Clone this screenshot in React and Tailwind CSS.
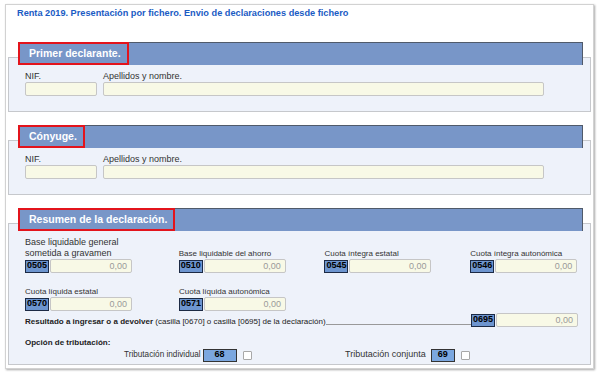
import React from 'react';

const font = "font-['Liberation_Sans',Arial,sans-serif]";

const SectionHeader = ({ title }) => (
  <div className="relative z-10 ml-[12px] flex h-[23px] w-[565px] border-t border-r border-[#505a6a] bg-[#7896c8]">
    <div className="flex h-[23px] -mt-px items-center border-2 border-[#e3141c] pl-[9px] pr-[6px] text-[10.5px] font-bold text-white">
      {title}
    </div>
  </div>
);

const Panel = ({ className = '', children }) => (
  <div className={`mx-[2px] -mt-[8px] border border-[#c6c8cc] bg-[#eef2fa] pl-[16px] ${className}`}>
    {children}
  </div>
);

const Input = ({ className = '', value }) => (
  <div className={`h-[14px] rounded-[2px] border border-[#c6c6c6] bg-[#f8f9e6] pr-[4px] text-right text-[9px] leading-[12px] text-[#9a9a9a] ${className}`}>
    {value}
  </div>
);

const Code = ({ code }) => (
  <div className="flex h-[13px] w-[24px] items-center justify-center border border-[#1c2a44] bg-[#6d95cf] text-[9px] font-bold text-black">
    {code}
  </div>
);

const Amount = ({ code }) => (
  <div className="flex items-center gap-[1px]">
    <Code code={code} />
    <Input className="h-[13px] w-[82px] leading-[11px]" value="0,00" />
  </div>
);

const Field = ({ label, code, width, big }) => (
  <div className="flex flex-col justify-end" style={{ width }}>
    <div className={big ? 'text-[9px] leading-[11px] text-[#333]' : 'text-[8px] leading-[11px] text-[#333]'}>
      {label}
    </div>
    <Amount code={code} />
  </div>
);

const IdPanel = () => (
  <div className="flex gap-[6px] pt-[12px] pb-[15px]">
    <div>
      <div className="text-[9px] leading-[12px] text-[#333]">NIF.</div>
      <Input className="w-[72px]" />
    </div>
    <div>
      <div className="text-[9px] leading-[12px] text-[#333]">Apellidos y nombre.</div>
      <Input className="w-[441px]" />
    </div>
  </div>
);

const Option = ({ label, code, boxW, small }) => (
  <div className="flex items-center">
    <span className={small ? 'text-[8.2px] text-[#333]' : 'text-[9px] text-[#333]'}>{label}</span>
    <div
      className={`${small ? 'ml-[2px]' : 'ml-[5px]'} flex h-[13px] items-center justify-center border border-[#333] bg-[#7ba7df] text-[9px] font-bold text-black`}
      style={{ width: boxW }}
    >
      {code}
    </div>
    <div className="ml-[6px] h-[9px] w-[9px] rounded-[1px] border border-[#a8a8a8] bg-white" />
  </div>
);

export default function App() {
  return (
    <div className={`h-[372px] w-[600px] overflow-hidden bg-white pt-[4px] pl-[5px] ${font}`}>
      <div className="h-[365px] w-[589px] border border-[#d2d2d2] bg-white shadow-[1px_1px_2px_rgba(0,0,0,0.35)]">
        <div className="pt-[3px] pl-[11px] text-[9.2px] font-bold leading-[11px] text-[#1a5bc4]">
          Renta 2019. Presentación por fichero. Envio de declaraciones desde fichero
        </div>

        <div className="mt-[23px]">
          <SectionHeader title="Primer declarante." />
          <Panel>
            <IdPanel />
          </Panel>
        </div>

        <div className="mt-[13px]">
          <SectionHeader title="Cónyuge." />
          <Panel>
            <IdPanel />
          </Panel>
        </div>

        <div className="mt-[13px]">
          <SectionHeader title="Resumen de la declaración." />
          <Panel className="h-[142px] pt-[13px]">
            <div className="flex">
              <Field width={154} big code="0505" label={<>Base liquidable general<br />sometida a gravamen</>} />
              <Field width={146} code="0510" label="Base liquidable del ahorro" />
              <Field width={146} code="0545" label="Cuota íntegra estatal" />
              <Field width={120} code="0546" label="Cuota íntegra autonómica" />
            </div>
            <div className="mt-[13px] flex">
              <Field width={154} code="0570" label="Cuota líquida estatal" />
              <Field width={146} code="0571" label="Cuota líquida autonómica" />
            </div>
            <div className="mt-[3px] flex h-[13px] items-end pr-[12px]">
              <span className="text-[8px] leading-[10px] text-[#222]">
                <b>Resultado a ingresar o a devolver</b> (casilla [0670] o casilla [0695] de la declaración)
              </span>
              <div className="mb-[2px] flex-1 border-b border-[#999]" />
              <Amount code="0695" />
            </div>
            <div className="mt-[11px] text-[8px] font-bold leading-[10px] text-[#222]">Opción de tributación:</div>
            <div className="flex h-[14px] items-center pl-[99px]">
              <div className="w-[221px]">
                <Option small label="Tributación individual" code="68" boxW={34} />
              </div>
              <Option label="Tributación conjunta" code="69" boxW={24} />
            </div>
          </Panel>
        </div>
      </div>
    </div>
  );
}
